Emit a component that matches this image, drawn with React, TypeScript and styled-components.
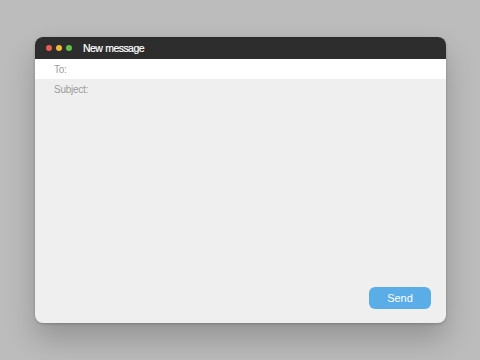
import React from "react";
import styled, { createGlobalStyle } from "styled-components";

const Global = createGlobalStyle`
  html, body { margin: 0; padding: 0; background: #bcbcbc; }
  body { font-family: "Liberation Sans", Arial, sans-serif; }
`;

const Page = styled.div`
  width: 480px;
  height: 360px;
  box-sizing: border-box;
  padding: 37px 0 0 35px;
`;

const Window = styled.div`
  width: 411px;
  height: 286px;
  border-radius: 8px;
  background: #efefef;
  overflow: hidden;
  display: flex;
  flex-direction: column;
  box-shadow: 0 16px 30px rgba(0, 0, 0, 0.22), 0 1px 3px rgba(0, 0, 0, 0.2);
`;

const TitleBar = styled.div`
  height: 22px;
  background: #2d2d2d;
  display: flex;
  align-items: center;
  padding-left: 11px;
  flex-shrink: 0;
`;

const Dots = styled.div`
  display: flex;
  gap: 4px;
  margin-right: 11px;
`;

const Dot = styled.span<{ $c: string }>`
  width: 6px;
  height: 6px;
  border-radius: 50%;
  background: ${(p) => p.$c};
`;

const Title = styled.div`
  color: #ffffff;
  font-size: 10.5px;
  letter-spacing: -0.55px;
  word-spacing: 0.5px;
  -webkit-text-stroke: 0.2px #ffffff;
`;

const Field = styled.div<{ $white?: boolean }>`
  height: 20px;
  box-sizing: border-box;
  padding-top: 1px;
  display: flex;
  align-items: center;
  padding-left: 19px;
  background: ${(p) => (p.$white ? "#ffffff" : "transparent")};
  color: #9c9c9c;
  font-size: 10px;
  letter-spacing: -0.25px;
  flex-shrink: 0;
`;

const Body = styled.div`
  flex: 1;
  display: flex;
  justify-content: flex-end;
  align-items: flex-end;
  padding: 0 15px 14px 0;
`;

const SendButton = styled.button`
  width: 62px;
  height: 22px;
  border: none;
  border-radius: 6px;
  background: #5aade6;
  color: #ffffff;
  font-family: "Liberation Sans", Arial, sans-serif;
  font-size: 11px;
  padding: 0;
  cursor: pointer;
`;

export default function App() {
  return (
    <>
      <Global />
      <Page>
        <Window>
          <TitleBar>
            <Dots>
              <Dot $c="#ee5b50" />
              <Dot $c="#f4b73a" />
              <Dot $c="#5cc343" />
            </Dots>
            <Title>New message</Title>
          </TitleBar>
          <Field $white>To:</Field>
          <Field>Subject:</Field>
          <Body>
            <SendButton>Send</SendButton>
          </Body>
        </Window>
      </Page>
    </>
  );
}
